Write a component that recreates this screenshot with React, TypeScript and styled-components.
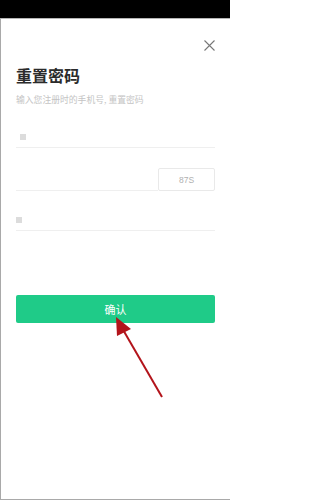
import React from "react";
import styled, { createGlobalStyle } from "styled-components";

const Global = createGlobalStyle`
  html, body { margin: 0; padding: 0; background: #fff; }
  body { width: 230px; height: 500px; overflow: hidden; font-family: "Noto Sans CJK SC", "Noto Sans", sans-serif; }
  * { box-sizing: border-box; }
`;

const Page = styled.div`
  position: relative;
  width: 230px;
  height: 500px;
  display: flex;
  flex-direction: column;
`;

const StatusBar = styled.div`
  height: 18px;
  background: #000;
  flex: none;
`;

const Screen = styled.div`
  flex: 1;
  display: flex;
  flex-direction: column;
  border-top: 1px solid #b5b5b5;
  border-left: 1px solid #a9a9a9;
  border-bottom: 1px solid #a9a9a9;
  padding: 0 15px 0 15px;
`;

const CloseRow = styled.div`
  display: flex;
  justify-content: flex-end;
  padding-top: 21px;
  height: 31px;
`;

const CloseIcon = styled.svg`
  width: 11px;
  height: 11px;
  display: block;
`;

const Title = styled.h1`
  margin: 15px 0 0 0;
  font-size: 16px;
  line-height: 20px;
  font-weight: 700;
  color: #2b2b2b;
`;

const Subtitle = styled.p`
  margin: 9px 0 2px 0;
  font-size: 8.8px;
  line-height: 12px;
  color: #c4c4c4;
  white-space: nowrap;
`;

const Field = styled.div<{ $offset?: number }>`
  height: 40px;
  display: flex;
  align-items: flex-end;
  padding-bottom: 7px;
  border-bottom: 1px solid #efefef;
  padding-left: ${(p) => p.$offset ?? 0}px;
`;

const FieldIcon = styled.span`
  width: 6px;
  height: 6px;
  background: #dcdcdc;
  display: block;
`;

const CodeRow = styled.div`
  display: flex;
  align-items: flex-end;
  height: 43px;
`;

const CodeInput = styled.div`
  flex: 1;
  height: 43px;
  border-bottom: 1px solid #efefef;
`;

const CodeBox = styled.div`
  width: 57px;
  height: 23px;
  border: 1px solid #e9e9e9;
  border-radius: 2px;
  display: flex;
  align-items: center;
  justify-content: center;
  font-family: "Liberation Sans", Arial, sans-serif;
  font-size: 8.5px;
  color: #b0b0b0;
`;

const Confirm = styled.button`
  margin-top: 64px;
  height: 28px;
  width: 100%;
  border: none;
  border-radius: 2px;
  background: #1fcb88;
  color: #fff;
  font-family: "Noto Sans CJK SC", sans-serif;
  font-size: 11px;
  padding: 0;
`;

const ArrowLayer = styled.svg`
  position: absolute;
  left: 0;
  top: 0;
  width: 230px;
  height: 500px;
  pointer-events: none;
`;

export default function App() {
  return (
    <Page>
      <Global />
      <StatusBar />
      <Screen>
        <CloseRow>
          <CloseIcon viewBox="0 0 11 11">
            <path d="M0.5 0.5 L10.5 10.5 M10.5 0.5 L0.5 10.5" stroke="#777" strokeWidth="1.1" />
          </CloseIcon>
        </CloseRow>
        <Title>重置密码</Title>
        <Subtitle>输入您注册时的手机号, 重置密码</Subtitle>
        <Field $offset={4}>
          <FieldIcon />
        </Field>
        <CodeRow>
          <CodeInput />
          <CodeBox>87S</CodeBox>
        </CodeRow>
        <Field $offset={-3}>
          <FieldIcon />
        </Field>
        <Confirm>确认</Confirm>
      </Screen>
      <ArrowLayer viewBox="0 0 230 500">
        <line x1="162" y1="397" x2="122" y2="328" stroke="#b3141b" strokeWidth="2" />
        <polygon points="116,317 131,329 117,336" fill="#b3141b" />
      </ArrowLayer>
    </Page>
  );
}
